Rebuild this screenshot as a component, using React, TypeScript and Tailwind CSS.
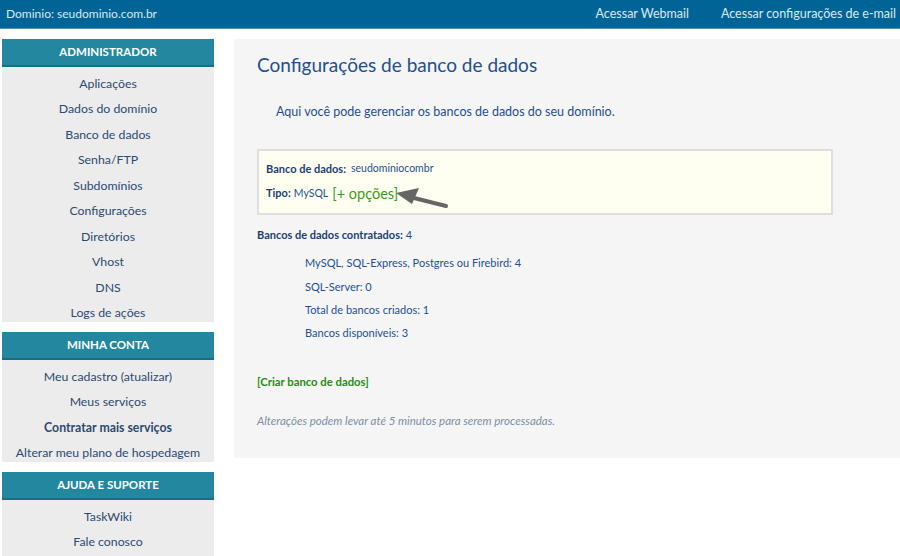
import React from 'react';

const admin = ['Aplicações', 'Dados do domínio', 'Banco de dados', 'Senha/FTP', 'Subdomínios', 'Configurações', 'Diretórios', 'Vhost', 'DNS', 'Logs de ações'];
const conta = ['Meu cadastro (atualizar)', 'Meus serviços', 'Contratar mais serviços', 'Alterar meu plano de hospedagem'];
const ajuda = ['TaskWiki', 'Fale conosco'];

const Section = ({title, items, bold, listClass}: {title: string; items: string[]; bold?: string; listClass: string}) => (
    <div className="flex flex-col">
        <div className="h-[28px] bg-[#23889f] border-b-2 border-[#1a6e82] flex items-center justify-center text-white font-bold text-[11.5px] uppercase">
            {title}
        </div>
        <ul className={`bg-[#ececec] flex flex-col pt-[4px] overflow-hidden ${listClass}`}>
            {items.map((item) => (
                <li key={item} className={`h-[25.5px] shrink-0 flex items-center justify-center text-[12.3px] text-[#2b4a70] ${item === bold ? 'font-bold' : ''}`}>
                    {item}
                </li>
            ))}
        </ul>
    </div>
);

export default function App() {
    return (
        <div className="w-[900px] h-[556px] bg-white font-['Lato',sans-serif] overflow-hidden">
            {/* topo */}
            <div className="h-[29px] bg-[#006596] border-b border-[#4c93b5] flex items-center justify-between pl-[6px] pr-[4px] text-[12.5px] text-[#dbe9f1]">
                <span className="text-[12px]">Dominio: seudominio.com.br</span>
                <div className="flex gap-[32px]">
                    <span>Acessar Webmail</span>
                    <span>Acessar configurações de e-mail</span>
                </div>
            </div>

            <div className="flex pt-[10px]">
                {/* menu lateral */}
                <div className="w-[212px] ml-[2px] flex flex-col gap-[10px]">
                    <Section title="Administrador" items={admin} listClass="h-[255px]"/>
                    <Section title="Minha conta" items={conta} bold="Contratar mais serviços" listClass="h-[102px]"/>
                    <Section title="Ajuda e suporte" items={ajuda} listClass="h-[60px]"/>
                </div>

                {/* conteudo */}
                <div className="ml-[20px] flex-1 h-[419px] bg-[#f5f5f5] pl-[23px] pt-[12px]">
                    <h1 className="text-[19px] leading-[28px] text-[#1d4f91]">Configurações de banco de dados</h1>
                    <p className="text-[12.5px] text-[#1d4f91] ml-[19px] mt-[24px]">Aqui você pode gerenciar os bancos de dados do seu domínio.</p>

                    <div className="relative mt-[27px] w-[576px] h-[66px] bg-[#fefff0] border-2 border-[#dedede] px-[7px] pt-[9px] text-[10.5px] text-[#1d4f91]">
                        <div className="h-[18px] flex items-center">
                            <b className="text-[11px] text-[#1b3f73]">Banco de dados:</b>
                            <span className="ml-[5px] text-[10.5px]">seudominiocombr</span>
                        </div>
                        <div className="mt-[5px] flex items-center gap-[3px]">
                            <b className="text-[11px] text-[#1b3f73]">Tipo:</b>
                            <span>MySQL</span>
                            <span className="text-[14.5px] text-[#3c9a1c] ml-[1px]">[+ opções]</span>
                        </div>
                        <svg className="absolute left-[129px] top-[32px]" width="64" height="28" viewBox="0 0 64 28">
                            <line x1="22" y1="14" x2="58" y2="23" stroke="#666" strokeWidth="4" strokeLinecap="round"/>
                            <polygon points="8,10 31,5 24,21" fill="#666"/>
                        </svg>
                    </div>

                    <div className="mt-[12px] text-[11px] text-[#1d4f91]"><b className="text-[#1b3f73]">Bancos de dados contratados:</b> 4</div>
                    <ul className="ml-[48px] mt-[12px] flex flex-col gap-[7px] text-[11px] text-[#1d4f91]">
                        <li className="h-[16.3px]">MySQL, SQL-Express, Postgres ou Firebird: 4</li>
                        <li className="h-[16.3px]">SQL-Server: 0</li>
                        <li className="h-[16.3px]">Total de bancos criados: 1</li>
                        <li className="h-[16.3px]">Bancos disponíveis: 3</li>
                    </ul>

                    <div className="mt-[33px] text-[11.3px] font-bold text-[#2b8a12]">[Criar banco de dados]</div>
                    <div className="mt-[21px] text-[11.5px] italic text-[#7d8ea3]">Alterações podem levar até 5 minutos para serem processadas.</div>
                </div>
            </div>
        </div>
    );
}
